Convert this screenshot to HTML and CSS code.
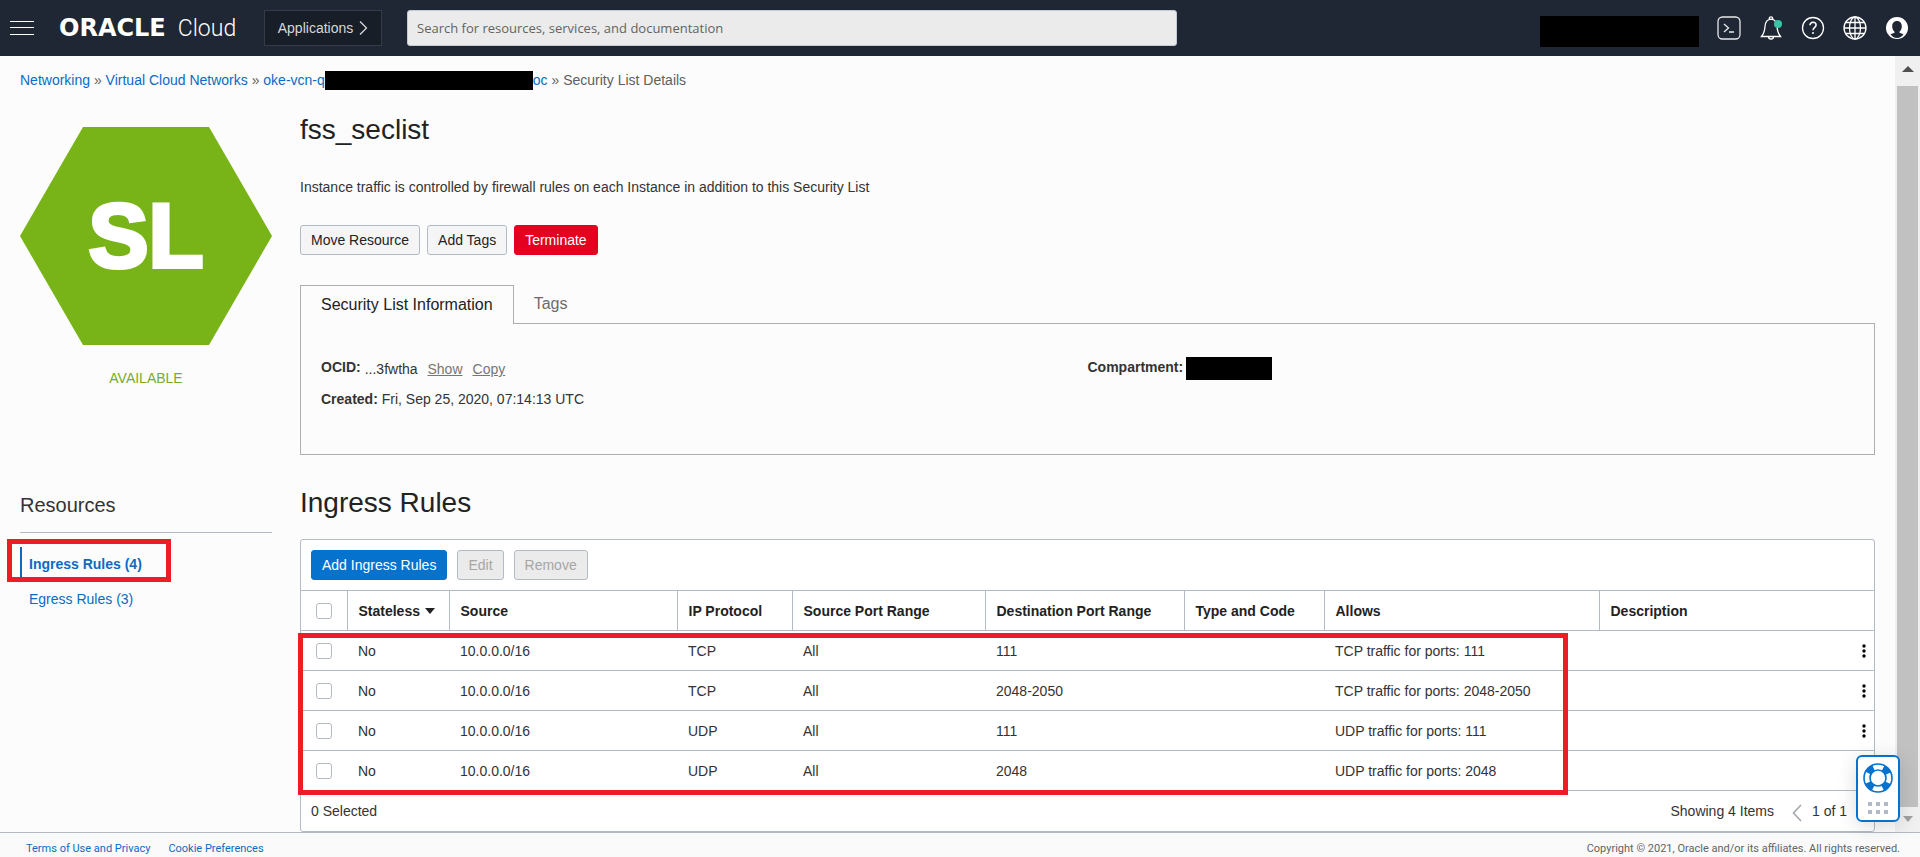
FILE: index.html
```html
<!DOCTYPE html>
<html lang="en">
<head>
<meta charset="utf-8">
<title>Security List Details</title>
<link rel="stylesheet" href="styles.css">
</head>
<body>
<header class="topbar">
  <button class="icon-btn menu-btn" aria-label="Menu">
    <svg width="24" height="14" viewBox="0 0 24 14" fill="none" stroke="#fff"><path d="M0 .5h24M0 6.500h24M0 13.500h24"/></svg>
  </button>
  <a class="logo" href="#"><span class="logo-oracle">ORACLE</span><span class="logo-cloud">Cloud</span></a>
  <button class="apps-btn">Applications
    <svg width="9" height="16" viewBox="0 0 9 16" fill="none" stroke="#d6d8da" stroke-width="1.300"><path d="M1 1.500l6.500 6.500L1 14.500"/></svg>
  </button>
  <input class="search" type="text" aria-label="Search" placeholder="Search for resources, services, and documentation">
  <div class="top-right">
    <span class="redact redact-region"></span>
    <button class="icon-btn" aria-label="Cloud Shell">
      <svg width="24" height="24" viewBox="0 0 24 24" fill="none" stroke="#e8e9ea" stroke-width="1.300"><rect x="1" y="1" width="22" height="22" rx="4.500"/><path d="M7 8l4.500 4L7 16M12 16h5"/></svg>
    </button>
    <button class="icon-btn" aria-label="Notifications">
      <svg width="24" height="24" viewBox="0 0 24 24" fill="none" stroke="#fff" stroke-width="1.300"><path d="M2.500 20.500C5 17.500 5.700 15 6 10.500 6.300 6 8 3.500 12 3.200c4 .3 5.700 2.800 6 7.300.3 4.500 1 7 3.500 10zM10.300 3.300V2.200a1.700 1.300 0 0 1 3.400 0v1.100M9.500 20.800a2.500 2.200 0 0 0 5 0"/><circle cx="19" cy="8" r="4" fill="#36c5a5" stroke="none"/></svg>
    </button>
    <button class="icon-btn" aria-label="Help">
      <svg width="24" height="24" viewBox="0 0 24 24" fill="none" stroke="#fff" stroke-width="1.300"><circle cx="12" cy="12" r="10.500"/><path d="M9 9.300c0-1.900 1.300-3 3-3s3.100 1.100 3.100 2.800c0 2.200-3.100 2.400-3.100 5.200" stroke-width="1.500"/><circle cx="12" cy="17" r="1" fill="#fff" stroke="none"/></svg>
    </button>
    <button class="icon-btn" aria-label="Language">
      <svg width="24" height="24" viewBox="0 0 24 24" fill="none" stroke="#fff" stroke-width="1.300"><circle cx="12" cy="12" r="11"/><ellipse cx="12" cy="12" rx="5.500" ry="11"/><path d="M12 1v22M1 12h22M2.500 6.500h19M2.500 17.500h19"/></svg>
    </button>
    <button class="icon-btn" aria-label="Profile">
      <svg width="24" height="24" viewBox="0 0 24 24"><circle cx="12" cy="12" r="11" fill="#fff"/><path d="M12 5c3 0 4.800 2.200 4.800 5.200 0 2.300-.9 4.300-2.300 5.500v1.100l4 1.500C17 20.500 14.800 22 12 22s-5-1.500-6.500-3.700l4-1.500v-1.100C8.100 14.500 7.200 12.500 7.200 10.200 7.200 7.200 9 5 12 5z" fill="#1e2733"/></svg>
    </button>
  </div>
</header>

<div class="body">
<main class="page">
  <nav class="crumbs" aria-label="Breadcrumb">
    <a href="#">Networking</a> » <a href="#">Virtual Cloud Networks</a> » <a href="#">oke-vcn-q<span class="redact redact-vcn"></span>oc</a> » <span>Security List Details</span>
  </nav>

  <div class="columns">
    <div class="status">
      <svg class="hexagon" viewBox="0 0 252 218" role="img" aria-label="SL">
        <polygon points="63,0 189,0 252,109 189,218 63,218 0,109" fill="#78b417"/>
        <text x="126" y="140" text-anchor="middle">SL</text>
      </svg>
      <p class="status-text">AVAILABLE</p>
    </div>

    <section class="details">
      <h1>fss_seclist</h1>
      <p class="intro">Instance traffic is controlled by firewall rules on each Instance in addition to this Security List</p>
      <div class="actions">
        <button class="btn">Move Resource</button>
        <button class="btn">Add Tags</button>
        <button class="btn btn-danger">Terminate</button>
      </div>
      <div class="tabs" role="tablist">
        <button class="tab tab-active" role="tab" aria-selected="true">Security List Information</button>
        <button class="tab" role="tab" aria-selected="false">Tags</button>
      </div>
      <div class="panel">
        <div class="facts">
          <p class="ocid"><b>OCID:</b> <span class="ocid-value">...3fwtha <a href="#">Show</a><a href="#">Copy</a></span></p>
          <p><b>Created:</b> Fri, Sep 25, 2020, 07:14:13 UTC</p>
        </div>
        <div class="facts">
          <p class="compartment"><b>Compartment:</b><span class="redact redact-compartment"></span></p>
        </div>
      </div>
    </section>

    <aside class="resources">
      <h2>Resources</h2>
      <ul>
        <li class="current"><a href="#">Ingress Rules (4)</a><span class="mark mark-nav"></span></li>
        <li><a href="#">Egress Rules (3)</a></li>
      </ul>
    </aside>

    <section class="rules">
      <h2>Ingress Rules</h2>
      <div class="table-box">
        <div class="toolbar">
          <button class="btn btn-primary">Add Ingress Rules</button>
          <button class="btn" disabled>Edit</button>
          <button class="btn" disabled>Remove</button>
        </div>
        <div class="table-wrap">
        <table>
          <colgroup><col class="c-check"><col class="c-stateless"><col class="c-source"><col class="c-proto"><col class="c-sport"><col class="c-dport"><col class="c-type"><col class="c-allows"><col><col class="c-menu"></colgroup>
          <thead>
            <tr><th><input type="checkbox" aria-label="Select all"></th><th>Stateless <svg width="10" height="6" viewBox="0 0 10 6"><path d="M0 0h10L5 6z" fill="#222"/></svg></th><th>Source</th><th>IP Protocol</th><th>Source Port Range</th><th>Destination Port Range</th><th>Type and Code</th><th>Allows</th><th colspan="2">Description</th></tr>
          </thead>
          <tbody>
            <tr><td><input type="checkbox" aria-label="Select rule 1"></td><td>No</td><td>10.0.0.0/16</td><td>TCP</td><td>All</td><td>111</td><td></td><td>TCP traffic for ports: 111</td><td></td><td><button class="kebab" aria-label="Rule actions"><svg width="4" height="14" viewBox="0 0 4 14"><circle cx="2" cy="2" r="1.700"/><circle cx="2" cy="7" r="1.700"/><circle cx="2" cy="12" r="1.700"/></svg></button></td></tr>
            <tr><td><input type="checkbox" aria-label="Select rule 2"></td><td>No</td><td>10.0.0.0/16</td><td>TCP</td><td>All</td><td>2048-2050</td><td></td><td>TCP traffic for ports: 2048-2050</td><td></td><td><button class="kebab" aria-label="Rule actions"><svg width="4" height="14" viewBox="0 0 4 14"><circle cx="2" cy="2" r="1.700"/><circle cx="2" cy="7" r="1.700"/><circle cx="2" cy="12" r="1.700"/></svg></button></td></tr>
            <tr><td><input type="checkbox" aria-label="Select rule 3"></td><td>No</td><td>10.0.0.0/16</td><td>UDP</td><td>All</td><td>111</td><td></td><td>UDP traffic for ports: 111</td><td></td><td><button class="kebab" aria-label="Rule actions"><svg width="4" height="14" viewBox="0 0 4 14"><circle cx="2" cy="2" r="1.700"/><circle cx="2" cy="7" r="1.700"/><circle cx="2" cy="12" r="1.700"/></svg></button></td></tr>
            <tr><td><input type="checkbox" aria-label="Select rule 4"></td><td>No</td><td>10.0.0.0/16</td><td>UDP</td><td>All</td><td>2048</td><td></td><td>UDP traffic for ports: 2048</td><td></td><td></td></tr>
          </tbody>
        </table>
        <span class="mark mark-rows"></span>
        </div>
        <div class="table-foot">
          <span>0 Selected</span>
          <span class="showing">Showing 4 Items</span>
          <button class="icon-btn prev" aria-label="Previous page"><svg width="10" height="18" viewBox="0 0 10 18" fill="none" stroke="#a3a7ad" stroke-width="1.600"><path d="M9 1L1.500 9 9 17"/></svg></button>
          <span>1 of 1</span>
        </div>
      </div>
    </section>
  </div>
</main>
<div class="scrollbar" aria-hidden="true">
  <svg width="12" height="6" viewBox="0 0 12 6"><path d="M0 6h12L6 0z" fill="#505050"/></svg>
  <span class="thumb"></span>
  <svg width="10" height="6" viewBox="0 0 10 6"><path d="M0 0h10L5 6z" fill="#a0a0a0"/></svg>
</div>
</div>

<button class="support" aria-label="Support">
  <svg width="30" height="30" viewBox="0 0 30 30" fill="none" stroke="#0572ce"><circle cx="15" cy="15" r="11.200" stroke-width="6.500" stroke-dasharray="7.600 9.990" stroke-dashoffset="-5"/><circle cx="15" cy="15" r="14" stroke-width="1.600"/><circle cx="15" cy="15" r="8" stroke-width="1.600"/></svg>
  <svg width="20" height="12" viewBox="0 0 20 12" fill="#b3bac5"><path d="M0 0h4v4H0zM8 0h4v4H8zM16 0h4v4h-4zM0 8h4v4H0zM8 8h4v4H8zM16 8h4v4h-4z"/></svg>
</button>

<footer class="footer">
  <a href="#">Terms of Use and Privacy</a>
  <a href="#">Cookie Preferences</a>
  <span class="copyright">Copyright © 2021, Oracle and/or its affiliates. All rights reserved.</span>
</footer>
</body>
</html>
```
FILE: styles.css
```css
* { box-sizing: border-box; }
body {
  margin: 0;
  height: 100vh;
  display: flex;
  flex-direction: column;
  overflow: hidden;
  background: #fcfcfc;
  color: #333;
  font: 14px/20px "Liberation Sans", Arial, sans-serif;
}
h1, h2, p, ul { margin: 0; padding: 0; font-weight: 400; }
ul { list-style: none; }
a { color: #0d6ac4; text-decoration: none; }
button, input { font: inherit; margin: 0; }
button { cursor: pointer; }
.icon-btn { display: flex; padding: 0; border: 0; background: none; }
.redact { display: inline-block; background: #000; }

.topbar {
  display: flex;
  align-items: center;
  flex: none;
  height: 56px;
  padding: 0 11px 0 10px;
  background: #1e2733;
}
.logo { display: flex; align-items: baseline; gap: 12px; width: 205px; margin-left: 25px; color: #fff; line-height: 28px; }
.logo-oracle { font: 700 24px/28px "DejaVu Sans", sans-serif; }
.logo-cloud { font: 300 23px/28px Roboto, sans-serif; }
.apps-btn {
  display: flex;
  align-items: center;
  justify-content: center;
  gap: 6px;
  width: 118px;
  height: 36px;
  padding: 0;
  border: 1px solid #343d47;
  background: #171e27;
  color: #d6d8da;
}
.search {
  width: 770px;
  min-width: 0;
  height: 36px;
  margin-left: 25px;
  padding: 0 9px;
  border: 1px solid #c5c9d0;
  border-radius: 3px;
  background: #ebebeb;
  font: 13px "Open Sans", sans-serif;
}
.search::placeholder { color: #636363; opacity: 1; }
.top-right { display: flex; align-items: center; gap: 18px; margin-left: auto; }
.redact-region { width: 159px; height: 31px; margin-top: 7px; }

.body { display: flex; flex: 1; min-height: 0; }
.page { flex: 1; min-width: 0; padding: 14px 20px 0; overflow: hidden; }
.crumbs { height: 20px; color: #5f5f5f; }
.redact-vcn { width: 208px; height: 19px; vertical-align: -5px; }
.columns { display: grid; grid-template-columns: 252px minmax(0, 1fr); column-gap: 28px; row-gap: 32px; padding-top: 20px; }

.status { padding-top: 17px; }
.hexagon { display: block; width: 100%; }
.hexagon text { font: 700 90px "Liberation Sans", Arial, sans-serif; fill: #fff; stroke: #fff; stroke-width: 4px; }
.status-text { margin-top: 23px; text-align: center; color: #78ad2c; }

h1, .rules h2 { font-size: 28px; line-height: 36px; color: #222; }
h1 { padding-top: 2px; }
.intro { margin-top: 29px; }
.actions, .toolbar { display: flex; gap: 7px; }
.actions { margin-top: 28px; }
.btn {
  height: 30px;
  padding: 0 10px;
  border: 1px solid #b3bac5;
  border-radius: 3px;
  background: #f5f5f5;
  color: #222;
}
.btn:disabled { background: #ebebeb; color: #a6a6a6; }
.btn-danger { border-color: #e5001f; background: #e5001f; color: #fff; }
.btn-primary { border-color: #0572ce; background: #0572ce; color: #fff; }

.tabs { display: flex; margin-top: 30px; }
.tab {
  height: 38px;
  padding: 0 20px;
  border: 0;
  background: none;
  color: #6b6b6b;
  font-size: 16px;
}
.tab-active {
  height: 39px;
  margin-bottom: -1px;
  border: 1px solid #acafb0;
  border-bottom: 0;
  background: #fcfcfc;
  color: #222;
  z-index: 1;
}
.panel { display: grid; grid-template-columns: 1fr 1fr; height: 132px; padding: 33px 20px 0; border: 1px solid #acafb0; }
.facts { display: grid; align-content: start; gap: 10px; }
.facts:last-child p { height: 24px; }
.ocid { display: flex; gap: 4px; }
.ocid-value { padding-top: 2px; line-height: 20px; }
.ocid-value a { margin-left: 6px; margin-right: 4px; color: #767676; text-decoration: underline; }
.compartment { display: flex; gap: 3px; }
.redact-compartment { width: 86px; height: 23px; }

.resources h2 { padding: 5px 0 14px; border-bottom: 1px solid #b3bac5; font-size: 20px; line-height: 26px; }
.resources ul { padding-top: 14px; display: grid; gap: 5px; }
.resources li { position: relative; height: 30px; padding: 7px 0 0 9px; }
.resources .current { padding-left: 7px; border-left: 2px solid #0d6ac4; font-weight: 700; }
.mark { position: absolute; border: 5px solid #ee1c25; pointer-events: none; }
.mark-nav { top: -8px; left: -15px; width: 164px; height: 43px; }

.rules h2 { line-height: 32px; }
.table-box { margin-top: 20px; border: 1px solid #b3bac5; border-radius: 3px; background: #fff; }
.toolbar { padding: 10px; gap: 10px; }
.table-wrap { position: relative; }
.mark-rows { top: 43px; left: -3px; width: 1270px; bottom: -4px; }
table { width: 100%; table-layout: fixed; border-collapse: collapse; }
.c-check { width: 46px; }
.c-stateless { width: 102px; }
.c-source { width: 228px; }
.c-proto { width: 115px; }
.c-sport { width: 193px; }
.c-dport { width: 199px; }
.c-type { width: 140px; }
.c-allows { width: 275px; }
.c-menu { width: 20px; }
th, td { height: 40px; padding: 0 11px; border-top: 1px solid #b3bac5; text-align: left; white-space: nowrap; line-height: 16px; }
th { border-right: 1px solid #b3bac5; color: #222; }
th:last-child { border-right: 0; }
th svg { margin-left: 1px; vertical-align: 2px; }
tbody tr:last-child td { border-bottom: 1px solid #b3bac5; }
td:first-child, th:first-child { padding: 0 0 0 15px; }
td:last-child { padding: 0; }
input[type="checkbox"] {
  display: block;
  appearance: none;
  width: 16px;
  height: 16px;
  border: 1px solid #b3bac5;
  border-radius: 3px;
  background: #fff;
}
.kebab { display: flex; padding: 0 8px; border: 0; background: none; }
.table-foot { display: flex; align-items: center; height: 40px; padding: 0 27px 0 10px; }
.showing { margin-left: auto; }
.prev { margin: 3px 10px 0 18px; }

.scrollbar { display: flex; flex-direction: column; align-items: center; width: 25px; padding: 10px 0; background: #f0f0f0; }
.scrollbar svg { flex: none; }
.thumb { flex: 1; width: 21px; margin: 14px 0 9px; background: #c1c1c1; }

.support {
  position: fixed;
  right: 20px;
  bottom: 35px;
  display: grid;
  justify-items: center;
  align-content: center;
  gap: 9px;
  width: 44px;
  height: 67px;
  padding: 0;
  border: 2px solid #0572ce;
  border-radius: 6px;
  background: #fff;
  box-shadow: 0 4px 20px rgba(0, 0, 0, .14);
  z-index: 2;
}

.footer {
  display: flex;
  align-items: center;
  gap: 18px;
  flex: none;
  height: 25px;
  padding: 8px 20px 0 26px;
  border-top: 1px solid #b3bac5;
  background: #fafafa;
  font: 11px/16px Roboto, sans-serif;
}
.copyright { margin-left: auto; color: #636363; }
```
